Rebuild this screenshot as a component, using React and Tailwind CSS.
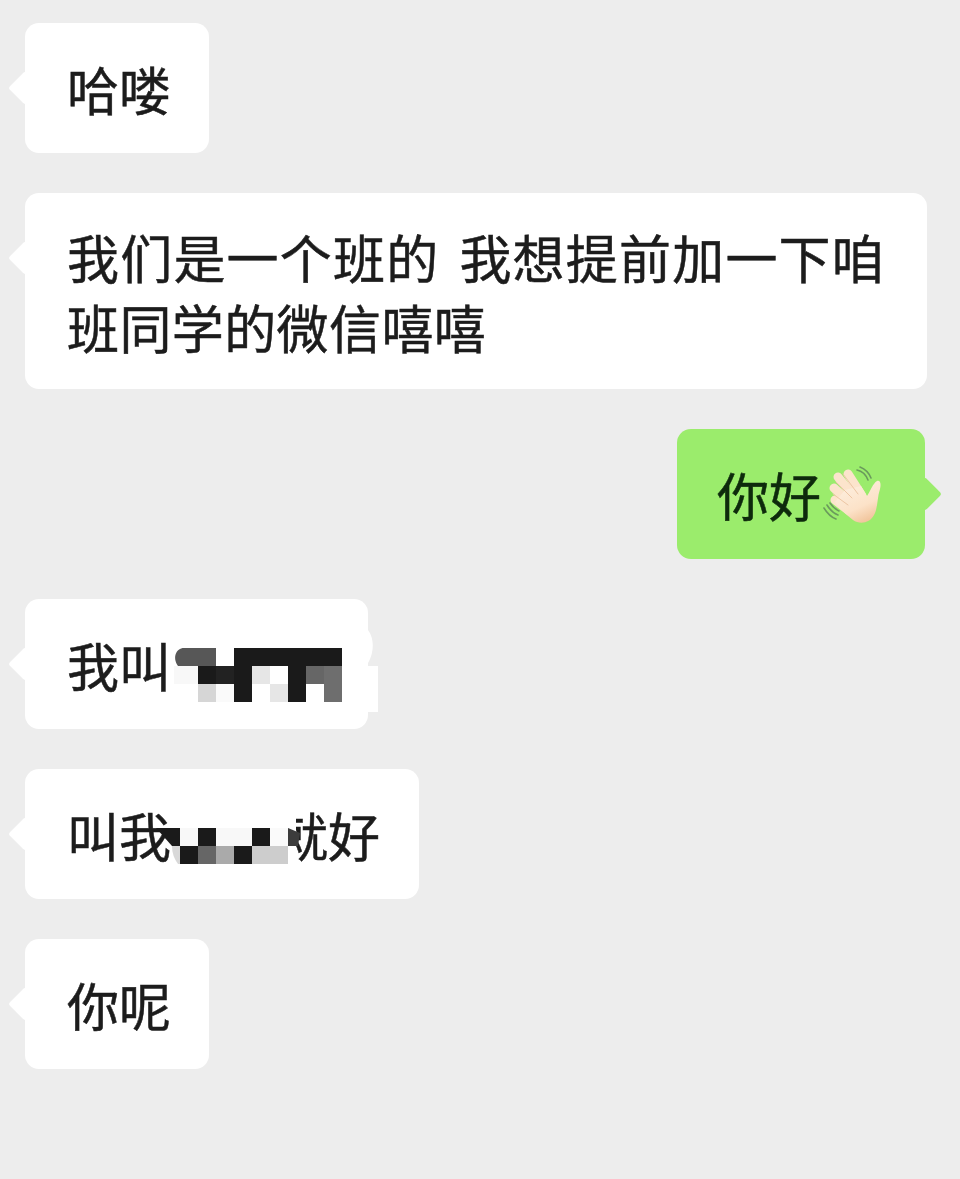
const Tail = ({ side = "left", color = "bg-white" }) => (
  <span
    className={`absolute top-[53px] w-[24px] h-[24px] rotate-45 rounded-[3px] ${color} ${
      side === "left" ? "left-[-12px]" : "right-[-12px]"
    }`}
  />
);

const Bubble = ({ children, className = "pt-[31px] pb-[29px]" }) => (
  <div className={`relative rounded-[14px] bg-white pl-[42px] pr-[38px] whitespace-nowrap text-[#1c1c1c] ${className}`}>
    <Tail />
    {children}
  </div>
);

const Px = ({ x, y, c, w = 18, h = 18 }) => <rect x={x} y={y} width={w} height={h} fill={c} />;

const D = "#1a1a1a";

const MosaicA = () => (
  <svg className="absolute left-[-25px] top-[-9px] z-10 overflow-visible" width="440" height="140" viewBox="0 590 440 140">
    <path d="M366 628 C375 636 375 654 366 666 Z" fill="#fff" />
    <rect x="342" y="666" width="36" height="46" fill="#fff" />
    <rect x="174" y="666" width="24" height="18" fill="#f8f8f8" />
    <path d="M216 648 H184 C176 648 172 658 178 666 H216 Z" fill="#575757" />
    <Px x={234} y={648} w={108} c={D} />
    <Px x={198} y={666} c={D} />
    <Px x={216} y={666} c="#222" />
    <Px x={234} y={666} c={D} />
    <Px x={252} y={666} c="#e6e6e6" />
    <Px x={270} y={666} c="#fff" />
    <Px x={288} y={666} c={D} />
    <Px x={306} y={666} c="#666" />
    <Px x={324} y={666} c="#6e6e6e" />
    <Px x={198} y={684} c="#d6d6d6" />
    <Px x={216} y={684} c="#fafafa" />
    <Px x={234} y={684} c={D} />
    <Px x={252} y={684} c="#fff" />
    <Px x={270} y={684} c="#e6e6e6" />
    <Px x={288} y={684} c={D} />
    <Px x={306} y={684} c="#fff" />
    <Px x={324} y={684} c="#6e6e6e" />
  </svg>
);

const MosaicB = () => (
  <svg className="absolute left-[-25px] top-[31px] z-10 overflow-visible" width="440" height="80" viewBox="0 800 440 80">
    <rect x="170" y="806" width="126" height="64" fill="#fff" />
    <path d="M156 828 H180 V846 H172 Z" fill={D} />
    <Px x={180} y={828} c="#f8f8f8" />
    <Px x={198} y={828} c={D} />
    <Px x={216} y={828} w={36} c="#f8f8f8" />
    <Px x={252} y={828} c={D} />
    <Px x={270} y={828} c="#fafafa" />
    <path d="M288 828 L300 833 L298 846 H288 Z" fill="#3c3c3c" />
    <path d="M172 846 H180 V864 H178 Q172 856 172 846 Z" fill="#d8d8d8" />
    <Px x={180} y={846} c={D} />
    <Px x={198} y={846} c="#666" />
    <Px x={216} y={846} c="#aaa" />
    <Px x={234} y={846} c={D} />
    <Px x={252} y={846} w={36} c="#cdcdcd" />
  </svg>
);

const Wave = () => (
  <svg className="block shrink-0 ml-[-6px] mb-[-1px]" width="75" height="70" viewBox="0 0 75 70" aria-hidden="true">
    <defs>
      <linearGradient id="skin" x1="0.25" y1="0.1" x2="0.7" y2="1">
        <stop offset="0" stopColor="#fdeedd" />
        <stop offset="0.6" stopColor="#fce2c8" />
        <stop offset="1" stopColor="#f0c298" />
      </linearGradient>
    </defs>
    <g fill="none" stroke="#6a9a5c" strokeWidth="1.6" strokeLinecap="round">
      <path d="M9 48 C12 53 16 57 21 59" />
      <path d="M12 45 C15 50 18 53 23 55" />
      <path d="M15 43 C17 46 20 49 24 51" />
      <path d="M42 10 C47 11 51 15 53 20" />
      <path d="M45 7 C50 9 54 13 56 18" />
    </g>
    <g stroke="#fce4cc" strokeLinecap="round" fill="none">
      <path d="M47 36 L33 14" strokeWidth="9" />
      <path d="M40 38 L23 17" strokeWidth="9" />
      <path d="M36 44 L19 28" strokeWidth="9" />
      <path d="M33 50 L20 40" strokeWidth="9" />
    </g>
    <path
      d="M30 30 L46 26 L52 36 C55 32 58 23 62 21 C66 20 66 25 65 29 C62 38 63 48 59 55 C55 63 45 65 38 60 C32 55 25 50 20 42 Z"
      fill="url(#skin)"
    />
    <g fill="none" stroke="#ecc6a4" strokeWidth="1" strokeLinecap="round">
      <path d="M28 14 L43 34" />
      <path d="M21 22 L37 38" />
      <path d="M18 34 L33 45" />
    </g>
  </svg>
);

export default function App() {
  return (
    <div
      className="min-h-[1179px] bg-[#ededed] pt-[23px] pl-[25px] pr-[33px] flex flex-col gap-[40px] text-[52px] leading-[70px] font-normal [-webkit-text-stroke:0.5px]"
      style={{ fontFamily: '"Noto Sans CJK SC", "Noto Sans", sans-serif' }}
    >
      <div className="flex">
        <Bubble>哈喽</Bubble>
      </div>
      <Bubble className="w-[902px] pt-[29px] pb-[27px]">
        <div className="tracking-[1.2px]">我们是一个班的<span className="inline-block w-[20px]" />我想提前加一下咱</div>
        <div className="tracking-[0.4px]">班同学的微信嘻嘻</div>
      </Bubble>
      <div className="flex justify-end pr-[2px]">
        <div className="relative flex rounded-[14px] bg-[#9bec6c] pl-[40px] pr-[35px] pt-[31px] pb-[29px] text-[#0e2a0c]">
          <Tail side="right" color="bg-[#9bec6c]" />
          <span className="relative">你好</span>
          <Wave />
        </div>
      </div>
      <div className="flex">
        <Bubble className="w-[343px] pt-[31px] pb-[29px]">
          我叫
          <MosaicA />
        </Bubble>
      </div>
      <div className="flex">
        <Bubble className="w-[394px] pt-[31px] pb-[29px]">
          叫我<span className="inline-block w-[105px]" />就好
          <MosaicB />
        </Bubble>
      </div>
      <div className="flex">
        <Bubble>你呢</Bubble>
      </div>
    </div>
  );
}
